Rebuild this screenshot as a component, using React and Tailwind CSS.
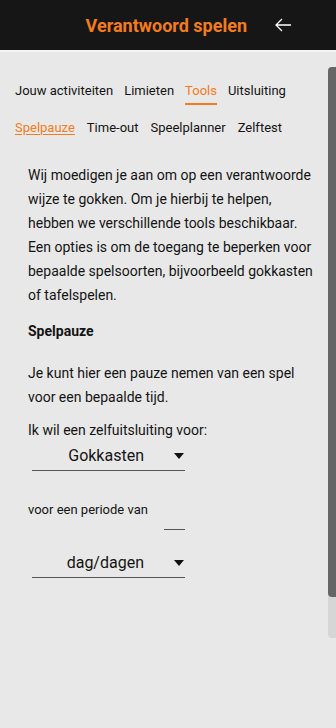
export default function App() {
  const font = { fontFamily: "Roboto, 'Noto Sans', sans-serif" };
  const intro = [
    "Wij moedigen je aan om op een verantwoorde",
    "wijze te gokken. Om je hierbij te helpen,",
    "hebben we verschillende tools beschikbaar.",
    "Een opties is om de toegang te beperken voor",
    "bepaalde spelsoorten, bijvoorbeeld gokkasten",
    "of tafelspelen.",
  ];
  return (
    <div className="w-[336px] h-[728px] bg-[#e8e8e8] overflow-hidden flex flex-col" style={font}>
      <header className="h-[52px] bg-[#161616] flex items-center justify-end shrink-0 border-b-2 border-[#f4f4f4]">
        <h1 className="text-[#f47b20] text-[18px] font-bold mr-[27px]">Verantwoord spelen</h1>
        <svg width="18" height="14" viewBox="0 0 18 14" className="mr-[44px]">
          <path d="M17 7H2M8 1L2 7l6 6" fill="none" stroke="#fff" strokeWidth="1.3" />
        </svg>
      </header>
      <div className="flex flex-1">
        <main className="flex-1 text-[#141414]">
          <nav className="flex gap-[11px] pl-[15px] pt-[29px] text-[13px]">
            <span>Jouw activiteiten</span>
            <span>Limieten</span>
            <span className="text-[#f47b20] border-b-2 border-[#f47b20] pb-[2px]">Tools</span>
            <span>Uitsluiting</span>
          </nav>
          <nav className="flex gap-[12px] pl-[15px] pt-[13px] text-[13px]">
            <span className="text-[#f47b20] underline underline-offset-2">Spelpauze</span>
            <span>Time-out</span>
            <span>Speelplanner</span>
            <span>Zelftest</span>
          </nav>
          <div className="pl-[28px] text-[14px]">
            <p className="mt-[26px] leading-[24px] whitespace-nowrap">
              {intro.map((l) => (
                <span key={l} className="block">{l}</span>
              ))}
            </p>
            <h2 className="mt-[14px] font-bold text-[14px]">Spelpauze</h2>
            <p className="mt-[19px] leading-[24px]">
              Je kunt hier een pauze nemen van een spel<br />voor een bepaalde tijd.
            </p>
            <p className="mt-[11px]">Ik wil een zelfuitsluiting voor:</p>
            <div className="ml-[4px] w-[153px] h-[30px] border-b border-[#555] flex items-center justify-end gap-[30px] pr-[1px]">
              <span className="text-[16px]">Gokkasten</span>
              <svg width="10" height="6" viewBox="0 0 10 6"><path d="M0 0h10L5 6z" fill="#111" /></svg>
            </div>
            <p className="mt-[29px] text-[13px]">voor een periode van</p>
            <div className="ml-[136px] w-[21px] mt-[9px] border-b border-[#555]" />
            <div className="ml-[4px] mt-[19px] w-[153px] h-[29px] border-b border-[#555] flex items-center justify-end gap-[30px] pr-[1px]">
              <span className="text-[16px]">dag/dagen</span>
              <svg width="10" height="6" viewBox="0 0 10 6"><path d="M0 0h10L5 6z" fill="#111" /></svg>
            </div>
          </div>
        </main>
        <aside className="w-[8px] mt-[15px] h-[571px] bg-[#d6d6d6] rounded-l-[4px] flex flex-col">
          <div className="h-[530px] bg-[#666] rounded-l-[4px]" />
        </aside>
      </div>
    </div>
  );
}
